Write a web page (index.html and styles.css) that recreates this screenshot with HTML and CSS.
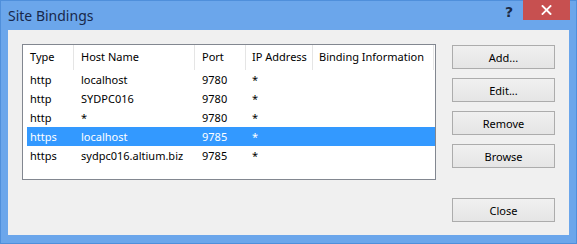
FILE: index.html
```html
<!DOCTYPE html>
<html>
<head>
<meta charset="utf-8">
<link rel="stylesheet" href="styles.css">
</head>
<body>
<div class="window">
  <div class="titlebar">
    <span class="title">Site Bindings</span>
    <span class="help">?</span>
    <span class="close-x">
      <svg width="11" height="10" viewBox="0 0 11 10"><path d="M1.5 1 L9.5 9 M9.5 1 L1.5 9" stroke="#fff" stroke-width="1.8" stroke-linecap="square"/></svg>
    </span>
  </div>
  <div class="client">
    <div class="list">
      <div class="header">
        <div class="hcell c1">Type</div>
        <div class="hcell c2">Host Name</div>
        <div class="hcell c3">Port</div>
        <div class="hcell c4">IP Address</div>
        <div class="hcell c5">Binding Information</div>
      </div>
      <div class="rows">
        <div class="row"><span class="cell c1">http</span><span class="cell c2">localhost</span><span class="cell c3">9780</span><span class="cell c4">*</span><span class="cell c5"></span></div>
        <div class="row"><span class="cell c1">http</span><span class="cell c2">SYDPC016</span><span class="cell c3">9780</span><span class="cell c4">*</span><span class="cell c5"></span></div>
        <div class="row"><span class="cell c1">http</span><span class="cell c2">*</span><span class="cell c3">9780</span><span class="cell c4">*</span><span class="cell c5"></span></div>
        <div class="row selected"><span class="cell c1">https</span><span class="cell c2">localhost</span><span class="cell c3">9785</span><span class="cell c4">*</span><span class="cell c5"></span></div>
        <div class="row"><span class="cell c1">https</span><span class="cell c2">sydpc016.altium.biz</span><span class="cell c3">9785</span><span class="cell c4">*</span><span class="cell c5"></span></div>
      </div>
    </div>
    <div class="actions">
      <button class="btn">Add...</button>
      <button class="btn">Edit...</button>
      <button class="btn">Remove</button>
      <button class="btn">Browse</button>
    </div>
    <div class="footer">
      <button class="btn">Close</button>
    </div>
  </div>
</div>
</body>
</html>
```
FILE: styles.css
```css
html, body {
  margin: 0;
  padding: 0;
}
body {
  width: 577px;
  height: 244px;
  overflow: hidden;
  font-family: "Noto Sans", "Open Sans", sans-serif;
  font-size: 11px;
}
.window {
  box-sizing: border-box;
  width: 577px;
  height: 244px;
  background: #6ba6eb;
  border: 1px solid #4f8fdb;
  display: flex;
  flex-direction: column;
  padding: 0 7px 8px 7px;
}
.titlebar {
  height: 29px;
  display: flex;
  align-items: flex-start;
  position: relative;
}
.title {
  font-size: 14px;
  color: #18284a;
  margin-top: 5px;
}
.help {
  margin-left: auto;
  margin-top: 3px;
  margin-right: 10px;
  font-weight: bold;
  font-size: 14px;
  color: #1b2a44;
  font-family: "DejaVu Sans", sans-serif;
}
.close-x {
  width: 47px;
  height: 20px;
  margin-top: -1px;
  margin-right: -1px;
  background: #c75050;
  display: flex;
  align-items: center;
  justify-content: center;
}
.close-x svg {
  display: block;
}
.client {
  flex: 1;
  background: #f0f0f0;
  display: grid;
  grid-template-columns: 414px 103px;
  grid-template-rows: 136px 24px;
  column-gap: 16px;
  row-gap: 18px;
  padding: 14px 14px 0 14px;
}
.list {
  box-sizing: border-box;
  border: 1px solid #828790;
  background: #fff;
  display: flex;
  flex-direction: column;
}
.header {
  display: grid;
  grid-template-columns: 51px 121px 51px 67px 121px;
  height: 25px;
}
.hcell {
  box-sizing: border-box;
  border-right: 1px solid #e5e5e5;
  line-height: 24px;
  color: #000;
  white-space: nowrap;
  padding-left: 7px;
}
.hcell.c4, .hcell.c5 {
  padding-left: 6px;
}
.rows {
  display: flex;
  flex-direction: column;
}
.row {
  display: grid;
  grid-template-columns: 47px 121px 51px 67px 120px;
  height: 19px;
  line-height: 20px;
  margin-left: 4px;
  color: #000;
}
.row.selected {
  background: #3399ff;
  color: #fff;
}
.cell {
  white-space: nowrap;
  padding-left: 7px;
}
.cell.c1 {
  padding-left: 3px;
}
.cell.c4, .cell.c5 {
  padding-left: 6px;
}
.actions {
  display: flex;
  flex-direction: column;
  gap: 9px;
  padding-top: 1px;
}
.btn {
  box-sizing: border-box;
  width: 103px;
  height: 24px;
  border: 1px solid #acacac;
  background: linear-gradient(#f0f0f0, #e5e5e5);
  font-family: "Noto Sans", "Open Sans", sans-serif;
  font-size: 11px;
  color: #000;
  padding: 0;
  margin: 0;
}
.footer {
  grid-column: 2;
  grid-row: 2;
}
```
